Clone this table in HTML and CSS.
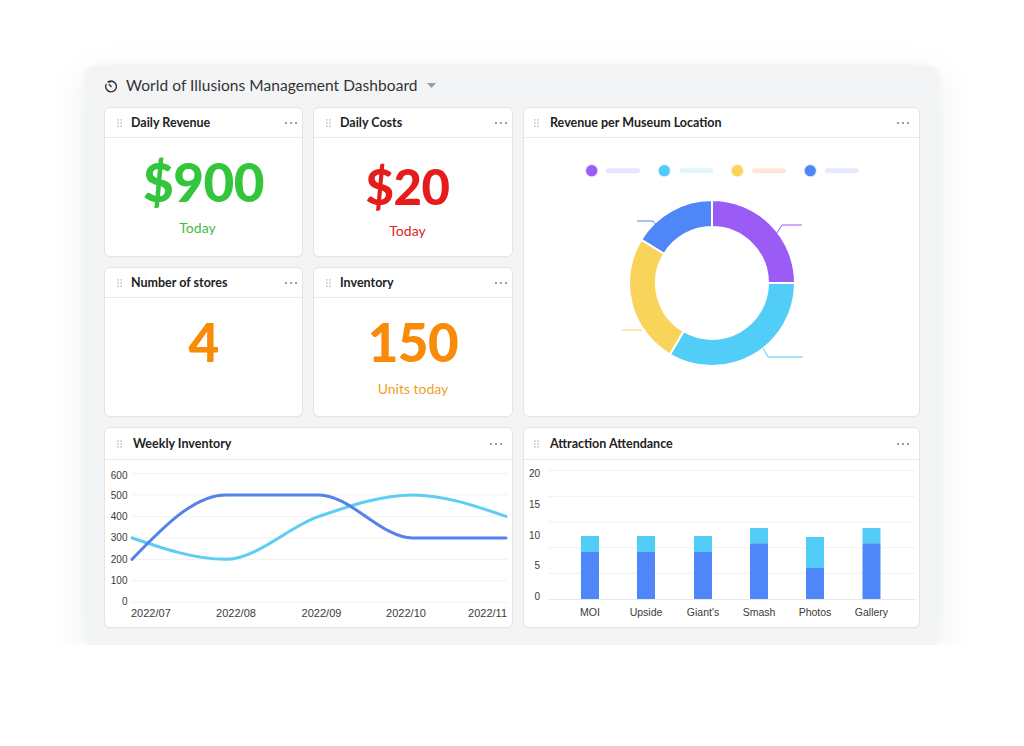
FILE: index.html
```html
<!DOCTYPE html>
<html lang="en">
<head>
<meta charset="utf-8">
<title>World of Illusions Management Dashboard</title>
<link rel="stylesheet" href="styles.css">
</head>
<body>
<div class="stage">
  <div class="panel">
    <div class="panel-title">
      <svg class="timer" width="14" height="14" viewBox="0 0 14 14">
        <path d="M4.2 2.9 A5.4 5.4 0 1 1 2.1 5.3" fill="none" stroke="#333" stroke-width="1.4" stroke-linecap="round"/>
        <path d="M4.2 2.9 L6.6 2.9" fill="none" stroke="#333" stroke-width="1.4" stroke-linecap="round"/>
        <path d="M7.2 7.6 L5.2 5.6" fill="none" stroke="#333" stroke-width="1.4" stroke-linecap="round"/>
      </svg>
      <span class="title-text">World of Illusions Management Dashboard</span>
      <svg class="caret" width="9" height="6" viewBox="0 0 9 6"><path d="M0 0 H9 L4.5 5 Z" fill="#9a9ca0"/></svg>
    </div>

    <div class="grid">
      <div class="card a-rev">
        <div class="card-head">
          <svg class="drag" width="5" height="8" viewBox="0 0 5 8"><g fill="#a3a7ad"><circle cx="0.9" cy="1" r="0.8"/><circle cx="4.1" cy="1" r="0.8"/><circle cx="0.9" cy="4" r="0.8"/><circle cx="4.1" cy="4" r="0.8"/><circle cx="0.9" cy="7" r="0.8"/><circle cx="4.1" cy="7" r="0.8"/></g></svg>
          <span class="card-title">Daily Revenue</span>
          <svg class="more" width="14" height="4" viewBox="0 0 14 4"><g fill="#7a7d82"><circle cx="2" cy="2" r="1"/><circle cx="7" cy="2" r="1"/><circle cx="12" cy="2" r="1"/></g></svg>
        </div>
        <div class="stat-body">
          <div class="big green">$900</div>
          <div class="sub green-sub shift">Today</div>
        </div>
      </div>

      <div class="card a-cost">
        <div class="card-head">
          <svg class="drag" width="5" height="8" viewBox="0 0 5 8"><g fill="#a3a7ad"><circle cx="0.9" cy="1" r="0.8"/><circle cx="4.1" cy="1" r="0.8"/><circle cx="0.9" cy="4" r="0.8"/><circle cx="4.1" cy="4" r="0.8"/><circle cx="0.9" cy="7" r="0.8"/><circle cx="4.1" cy="7" r="0.8"/></g></svg>
          <span class="card-title">Daily Costs</span>
          <svg class="more" width="14" height="4" viewBox="0 0 14 4"><g fill="#7a7d82"><circle cx="2" cy="2" r="1"/><circle cx="7" cy="2" r="1"/><circle cx="12" cy="2" r="1"/></g></svg>
        </div>
        <div class="stat-body costs">
          <div class="big red small">$20</div>
          <div class="sub red-sub tight">Today</div>
        </div>
      </div>

      <div class="card a-pie">
        <div class="card-head wide">
          <svg class="drag" width="5" height="8" viewBox="0 0 5 8"><g fill="#a3a7ad"><circle cx="0.9" cy="1" r="0.8"/><circle cx="4.1" cy="1" r="0.8"/><circle cx="0.9" cy="4" r="0.8"/><circle cx="4.1" cy="4" r="0.8"/><circle cx="0.9" cy="7" r="0.8"/><circle cx="4.1" cy="7" r="0.8"/></g></svg>
          <span class="card-title">Revenue per Museum Location</span>
          <svg class="more" width="14" height="4" viewBox="0 0 14 4"><g fill="#7a7d82"><circle cx="2" cy="2" r="1"/><circle cx="7" cy="2" r="1"/><circle cx="12" cy="2" r="1"/></g></svg>
        </div>
        <svg class="chart" width="395" height="278" viewBox="524 138 395 278">
          <g>
            <circle cx="591.7" cy="170.7" r="6.8" fill="#efe6fd"/><circle cx="591.7" cy="170.7" r="5.6" fill="#9a5cf5"/>
            <rect x="606" y="168.2" width="34" height="5" rx="2.5" fill="#ece2fd"/>
            <circle cx="664.3" cy="170.7" r="6.8" fill="#e3f6fe"/><circle cx="664.3" cy="170.7" r="5.6" fill="#4fcdf8"/>
            <rect x="679.3" y="168.2" width="34" height="5" rx="2.5" fill="#e2f5fd"/>
            <circle cx="737.3" cy="170.7" r="6.8" fill="#fdf3dc"/><circle cx="737.3" cy="170.7" r="5.6" fill="#f9d45b"/>
            <rect x="752" y="168.2" width="34" height="5" rx="2.5" fill="#fde7db"/>
            <circle cx="810.3" cy="170.7" r="6.8" fill="#e6edfe"/><circle cx="810.3" cy="170.7" r="5.6" fill="#4f86f8"/>
            <rect x="825" y="168.2" width="34" height="5" rx="2.5" fill="#e6eafd"/>
          </g>
          <g stroke="#ffffff" stroke-width="2" stroke-linejoin="round">
            <path d="M712,200 A83,83 0 0 1 795,283 L768,283 A56,56 0 0 0 712,227 Z" fill="#9a5cf5"/>
            <path d="M795,283 A83,83 0 0 1 669.88,354.51 L683.58,331.25 A56,56 0 0 0 768,283 Z" fill="#52cdf8"/>
            <path d="M669.88,354.51 A83,83 0 0 1 641.23,239.63 L664.25,253.74 A56,56 0 0 0 683.58,331.25 Z" fill="#f9d45b"/>
            <path d="M641.23,239.63 A83,83 0 0 1 712,200 L712,227 A56,56 0 0 0 664.25,253.74 Z" fill="#4f86f8"/>
          </g>
          <g fill="none" stroke-width="1">
            <path d="M777,233 L782,225 L802,225" stroke="#9a5cf5"/>
            <path d="M763,348 L768,357 L803,357" stroke="#52cdf8"/>
            <path d="M622,330 L642,330" stroke="#f9d45b"/>
            <path d="M637,221 L653,221 L657,226" stroke="#4f86f8"/>
          </g>
        </svg>
      </div>

      <div class="card a-stores">
        <div class="card-head">
          <svg class="drag" width="5" height="8" viewBox="0 0 5 8"><g fill="#a3a7ad"><circle cx="0.9" cy="1" r="0.8"/><circle cx="4.1" cy="1" r="0.8"/><circle cx="0.9" cy="4" r="0.8"/><circle cx="4.1" cy="4" r="0.8"/><circle cx="0.9" cy="7" r="0.8"/><circle cx="4.1" cy="7" r="0.8"/></g></svg>
          <span class="card-title">Number of stores</span>
          <svg class="more" width="14" height="4" viewBox="0 0 14 4"><g fill="#7a7d82"><circle cx="2" cy="2" r="1"/><circle cx="7" cy="2" r="1"/><circle cx="12" cy="2" r="1"/></g></svg>
        </div>
        <div class="stat-body">
          <div class="big orange">4</div>
        </div>
      </div>

      <div class="card a-inv">
        <div class="card-head">
          <svg class="drag" width="5" height="8" viewBox="0 0 5 8"><g fill="#a3a7ad"><circle cx="0.9" cy="1" r="0.8"/><circle cx="4.1" cy="1" r="0.8"/><circle cx="0.9" cy="4" r="0.8"/><circle cx="4.1" cy="4" r="0.8"/><circle cx="0.9" cy="7" r="0.8"/><circle cx="4.1" cy="7" r="0.8"/></g></svg>
          <span class="card-title">Inventory</span>
          <svg class="more" width="14" height="4" viewBox="0 0 14 4"><g fill="#7a7d82"><circle cx="2" cy="2" r="1"/><circle cx="7" cy="2" r="1"/><circle cx="12" cy="2" r="1"/></g></svg>
        </div>
        <div class="stat-body">
          <div class="big orange">150</div>
          <div class="sub orange-sub loose">Units today</div>
        </div>
      </div>

      <div class="card a-line">
        <div class="card-head wide tall">
          <svg class="drag" width="5" height="8" viewBox="0 0 5 8"><g fill="#a3a7ad"><circle cx="0.9" cy="1" r="0.8"/><circle cx="4.1" cy="1" r="0.8"/><circle cx="0.9" cy="4" r="0.8"/><circle cx="4.1" cy="4" r="0.8"/><circle cx="0.9" cy="7" r="0.8"/><circle cx="4.1" cy="7" r="0.8"/></g></svg>
          <span class="card-title">Weekly Inventory</span>
          <svg class="more" width="14" height="4" viewBox="0 0 14 4"><g fill="#7a7d82"><circle cx="2" cy="2" r="1"/><circle cx="7" cy="2" r="1"/><circle cx="12" cy="2" r="1"/></g></svg>
        </div>
        <svg class="chart" width="407" height="167" viewBox="105 460 407 167">
          <g stroke="#f0f1f3" stroke-width="1">
            <line x1="132" x2="507" y1="473.4" y2="473.4"/>
            <line x1="132" x2="507" y1="494.9" y2="494.9"/>
            <line x1="132" x2="507" y1="516.4" y2="516.4"/>
            <line x1="132" x2="507" y1="537.9" y2="537.9"/>
            <line x1="132" x2="507" y1="559.3" y2="559.3"/>
            <line x1="132" x2="507" y1="580.8" y2="580.8"/>
            <line x1="132" x2="507" y1="602.3" y2="602.3"/>
          </g>
          <g class="axis ylab" text-anchor="end">
            <text x="127.5" y="478.6">600</text>
            <text x="127.5" y="499.3">500</text>
            <text x="127.5" y="520.3">400</text>
            <text x="127.5" y="541.3">300</text>
            <text x="127.5" y="562.6">200</text>
            <text x="127.5" y="583.6">100</text>
            <text x="127.5" y="604.6">0</text>
          </g>
          <g class="axis xlab">
            <text x="131" y="617.2" text-anchor="start">2022/07</text>
            <text x="236" y="617.2" text-anchor="middle">2022/08</text>
            <text x="321.5" y="617.2" text-anchor="middle">2022/09</text>
            <text x="406" y="617.2" text-anchor="middle">2022/10</text>
            <text x="507" y="617.2" text-anchor="end">2022/11</text>
          </g>
          <path d="M132,537.9 C163.2,548.6 194.3,559.3 225.5,559.3 C256.7,559.3 287.8,527.1 319,516.4 C350.2,505.7 381.3,494.9 412.5,494.9 C443.7,494.9 474.8,505.6 506,516.4" fill="none" stroke="#5ccdf3" stroke-width="3" stroke-linecap="round"/>
          <path d="M132,559.3 C163.2,527.1 194.3,494.9 225.5,494.9 C256.7,494.9 287.8,494.9 319,494.9 C350.2,494.9 381.3,537.9 412.5,537.9 C443.7,537.9 474.8,537.9 506,537.9" fill="none" stroke="#5282ea" stroke-width="3" stroke-linecap="round"/>
        </svg>
      </div>

      <div class="card a-bar">
        <div class="card-head wide tall">
          <svg class="drag" width="5" height="8" viewBox="0 0 5 8"><g fill="#a3a7ad"><circle cx="0.9" cy="1" r="0.8"/><circle cx="4.1" cy="1" r="0.8"/><circle cx="0.9" cy="4" r="0.8"/><circle cx="4.1" cy="4" r="0.8"/><circle cx="0.9" cy="7" r="0.8"/><circle cx="4.1" cy="7" r="0.8"/></g></svg>
          <span class="card-title">Attraction Attendance</span>
          <svg class="more" width="14" height="4" viewBox="0 0 14 4"><g fill="#7a7d82"><circle cx="2" cy="2" r="1"/><circle cx="7" cy="2" r="1"/><circle cx="12" cy="2" r="1"/></g></svg>
        </div>
        <svg class="chart" width="395" height="167" viewBox="524 460 395 167">
          <g stroke="#f0f1f3" stroke-width="1">
            <line x1="548" x2="915" y1="470.7" y2="470.7"/>
            <line x1="548" x2="915" y1="496.3" y2="496.3"/>
            <line x1="548" x2="915" y1="522" y2="522"/>
            <line x1="548" x2="915" y1="547.7" y2="547.7"/>
            <line x1="548" x2="915" y1="573.3" y2="573.3"/>
          </g>
          <line x1="548" x2="915" y1="599.5" y2="599.5" stroke="#e6e8eb" stroke-width="1"/>
          <g class="axis ylab" text-anchor="end">
            <text x="540" y="476.9">20</text>
            <text x="540" y="507.9">15</text>
            <text x="540" y="538.6">10</text>
            <text x="540" y="569.3">5</text>
            <text x="540" y="600.3">0</text>
          </g>
          <g fill="#52cdf8">
            <rect x="581" y="536" width="18" height="16"/>
            <rect x="637" y="536" width="18" height="16"/>
            <rect x="694" y="536" width="18" height="16"/>
            <rect x="750" y="528" width="18" height="15.3"/>
            <rect x="806" y="537" width="18" height="31"/>
            <rect x="862.5" y="528" width="18" height="15.3"/>
          </g>
          <g fill="#4f86f8">
            <rect x="581" y="552" width="18" height="47"/>
            <rect x="637" y="552" width="18" height="47"/>
            <rect x="694" y="552" width="18" height="47"/>
            <rect x="750" y="543.3" width="18" height="55.7"/>
            <rect x="806" y="568" width="18" height="31"/>
            <rect x="862.5" y="543.3" width="18" height="55.7"/>
          </g>
          <g class="axis blab" text-anchor="middle">
            <text x="590" y="616">MOI</text>
            <text x="646" y="616">Upside</text>
            <text x="703" y="616">Giant's</text>
            <text x="759" y="616">Smash</text>
            <text x="815" y="616">Photos</text>
            <text x="871.5" y="616">Gallery</text>
          </g>
        </svg>
      </div>
    </div>
  </div>
</div>
</body>
</html>
```

FILE: styles.css
```css
* { box-sizing: border-box; }

body {
  margin: 0;
  background: #ffffff;
  font-family: Lato, "Noto Sans", Arial, sans-serif;
  color: #222;
}

.stage {
  padding-top: 65px;
  display: flex;
  justify-content: center;
}

.panel {
  width: 856px;
  height: 580px;
  background: #f3f4f6;
  border-radius: 14px;
  padding: 10px 20px 17px;
  box-shadow: 0 10px 40px rgba(30, 40, 60, 0.07), 0 2px 8px rgba(30, 40, 60, 0.03);
}

.panel-title {
  height: 20px;
  margin-bottom: 12px;
  display: flex;
  align-items: center;
}

.timer {
  flex: none;
  margin-top: 1px;
}

.title-text {
  margin-left: 8px;
  font-size: 15.5px;
  color: #333;
  letter-spacing: 0.05px;
}

.caret {
  margin-left: 9px;
  margin-top: 2px;
}

.grid {
  display: grid;
  grid-template-columns: 199px 200px 397px;
  grid-template-rows: 150px 150px 201px;
  gap: 10px;
}

.a-rev { grid-column: 1; grid-row: 1; }
.a-cost { grid-column: 2; grid-row: 1; }
.a-pie { grid-column: 3; grid-row: 1 / span 2; }
.a-stores { grid-column: 1; grid-row: 2; }
.a-inv { grid-column: 2; grid-row: 2; }
.a-line { grid-column: 1 / span 2; grid-row: 3; }
.a-bar { grid-column: 3; grid-row: 3; }

.card {
  background: #ffffff;
  border: 1px solid #e2e4e8;
  border-radius: 6px;
  display: flex;
  flex-direction: column;
  overflow: hidden;
  box-shadow: 0 1px 2px rgba(0, 0, 0, 0.02);
}

.card-head {
  flex: none;
  height: 30px;
  border-bottom: 1px solid #e6e8eb;
  display: flex;
  align-items: center;
  padding: 0 4px 0 12px;
}

.card-head.wide {
  padding: 0 9px 0 10px;
}

.card-head.tall {
  height: 32px;
}

.a-line .card-head.tall {
  padding-left: 12px;
}

.drag {
  flex: none;
}

.card-title {
  margin-left: 9px;
  font-size: 12.5px;
  font-weight: 700;
  color: #222;
  flex: 1;
  white-space: nowrap;
}

.card-head.wide .card-title {
  margin-left: 11px;
}

.more {
  flex: none;
}

.stat-body {
  flex: 1;
  display: flex;
  flex-direction: column;
  align-items: center;
  padding-top: 14px;
}

.stat-body.costs {
  padding-top: 18px;
  padding-right: 11px;
}

.big {
  font-size: 53px;
  line-height: 60px;
  font-weight: 900;
  letter-spacing: -0.5px;
}

.big.small {
  font-size: 49px;
}

.sub {
  margin-top: 6px;
  font-size: 14px;
  line-height: 20px;
}

.sub.shift { margin-right: 12px; }
.sub.tight { margin-top: 5px; }
.sub.loose { margin-top: 7px; }

.green { color: #33c53b; }
.green-sub { color: #47bb47; }
.red { color: #e41c1c; }
.red-sub { color: #d92626; }
.orange { color: #f88b0a; }
.orange-sub { color: #f1a02a; }

.chart {
  display: block;
  flex: none;
}

.axis text {
  font-family: "Liberation Sans", Arial, sans-serif;
  fill: #3a3a3a;
}

.ylab text { font-size: 10px; }
.xlab text { font-size: 11px; }
.blab text { font-size: 10.5px; }
```
